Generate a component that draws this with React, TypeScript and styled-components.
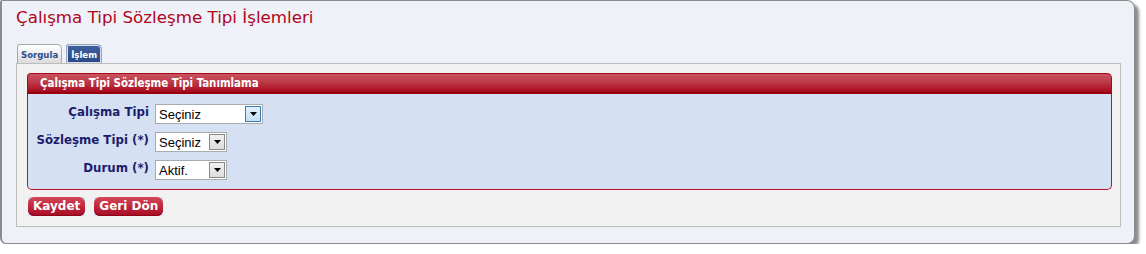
import React from "react";
import styled, { createGlobalStyle } from "styled-components";

const GlobalStyle = createGlobalStyle`
  html, body { margin: 0; padding: 0; background: #ffffff; }
  body { font-family: "DejaVu Sans", Verdana, sans-serif; }
`;

const Window = styled.div`
  box-sizing: border-box;
  width: 1135px;
  height: 244px;
  background: #eef2f8;
  border: 1px solid #8c8c8c;
  border-left: 2px solid #8c8c8c;
  border-radius: 2px 8px 8px 6px;
  box-shadow: 4px 4px 3px rgba(0, 0, 0, 0.45);
  display: flex;
  flex-direction: column;
  padding: 6px 0 0 14px;
`;

const Title = styled.h1`
  margin: 0;
  font-family: "DejaVu Sans", Verdana, sans-serif;
  font-weight: normal;
  font-size: 16.7px;
  line-height: 20px;
  color: #b0051a;
`;

const TabBar = styled.div`
  display: flex;
  gap: 4px;
  margin-top: 17px;
  padding-left: 1px;
  height: 19px;
`;

const Tab = styled.div<{ $active?: boolean }>`
  box-sizing: border-box;
  height: 19px;
  padding: 0 ${(p) => (p.$active ? 4 : 3)}px;
  display: flex;
  align-items: center;
  font-family: "DejaVu Sans Condensed", "DejaVu Sans", sans-serif;
  font-size: 9.5px;
  font-weight: bold;
  border: 1px solid ${(p) => (p.$active ? "#9aa6bc" : "#a8a8a8")};
  border-bottom: none;
  border-radius: 3px 5px 0 0;
  color: ${(p) => (p.$active ? "#ffffff" : "#2a4f8f")};
  background: ${(p) =>
    p.$active
      ? "linear-gradient(#3f5fa0, #2a4886)"
      : "linear-gradient(#ffffff, #dcdcdc)"};
  box-shadow: ${(p) => (p.$active ? "inset 0 0 0 1px #d8e0ee" : "none")};
`;

const Panel = styled.div`
  box-sizing: border-box;
  width: 1105px;
  height: 164px;
  background: #f2f2f2;
  border: 1px solid #bdbdbd;
  padding: 9px 8px 0 10px;
  display: flex;
  flex-direction: column;
  gap: 7px;
`;

const Fieldset = styled.div`
  box-sizing: border-box;
  width: 1085px;
  height: 117px;
  display: flex;
  flex-direction: column;
`;

const Legend = styled.div`
  box-sizing: border-box;
  height: 21px;
  border: 1px solid #a80a1c;
  border-bottom: 2px solid #98000f;
  border-radius: 4px 5px 0 0;
  background: linear-gradient(#c9535f 0%, #bd3a48 45%, #a8091c 100%);
  color: #ffffff;
  font-family: "DejaVu Sans Condensed", "DejaVu Sans", sans-serif;
  font-size: 11.4px;
  font-weight: bold;
  line-height: 18px;
  padding-left: 12px;
`;

const Body = styled.div`
  box-sizing: border-box;
  flex: 1;
  background: #d5e1f2;
  border: 1px solid #b3172a;
  border-top: none;
  border-radius: 0 0 5px 5px;
  padding: 10px 0 0 0;
  display: flex;
  flex-direction: column;
  gap: 8px;
`;

const Row = styled.div`
  display: flex;
  align-items: center;
  gap: 6px;
`;

const Label = styled.div`
  width: 121px;
  text-align: right;
  font-family: "DejaVu Sans", Verdana, sans-serif;
  font-size: 11.8px;
  font-weight: bold;
  color: #1c1c6c;
  margin-top: -5px;
  white-space: nowrap;
`;

const Select = styled.div<{ $width: number }>`
  box-sizing: border-box;
  width: ${(p) => p.$width}px;
  height: 20px;
  background: #ffffff;
  border: 1px solid #a5acb2;
  display: flex;
  align-items: center;
  justify-content: space-between;
  padding: 0 1px 0 3px;
  font-family: "Liberation Sans", Arial, sans-serif;
  font-size: 13px;
  color: #000000;
`;

const Arrow = styled.div<{ $focus?: boolean }>`
  box-sizing: border-box;
  width: 16px;
  height: 16px;
  display: flex;
  align-items: center;
  justify-content: center;
  border: 1px solid ${(p) => (p.$focus ? "#3d7bad" : "#8a8a8a")};
  background: ${(p) =>
    p.$focus ? "linear-gradient(#e4f1fb, #c3def5)" : "linear-gradient(#f0f0f0, #dcdcdc)"};
`;

const ArrowIcon = () => (
  <svg width="7" height="4" viewBox="0 0 7 4">
    <polygon points="0,0 7,0 3.5,4" fill="#000" />
  </svg>
);

const ButtonBar = styled.div`
  display: flex;
  gap: 9px;
  padding-left: 1px;
`;

const ButtonWrap = styled.div`
  background: #d8e4f4;
  display: flex;
`;

const Button = styled.button`
  height: 19px;
  padding: 0 5px;
  border: none;
  border-radius: 6px;
  background: linear-gradient(#d3485a 0%, #c32a3e 45%, #a50b22 100%);
  box-shadow: inset 0 -1px 0 #8d0018;
  color: #ffffff;
  font-family: "DejaVu Sans", Verdana, sans-serif;
  font-size: 12px;
  font-weight: bold;
  line-height: 19px;
  cursor: pointer;
`;

const fields = [
  { label: "Çalışma Tipi", value: "Seçiniz", width: 108, focus: true },
  { label: "Sözleşme Tipi (*)", value: "Seçiniz", width: 72 },
  { label: "Durum (*)", value: "Aktif.", width: 72 },
];

export default function App() {
  return (
    <>
      <GlobalStyle />
      <Window>
        <Title>Çalışma Tipi Sözleşme Tipi İşlemleri</Title>
        <TabBar>
          <Tab>Sorgula</Tab>
          <Tab $active>İşlem</Tab>
        </TabBar>
        <Panel>
          <Fieldset>
            <Legend>Çalışma Tipi Sözleşme Tipi Tanımlama</Legend>
            <Body>
              {fields.map((f) => (
                <Row key={f.label}>
                  <Label>{f.label}</Label>
                  <Select $width={f.width}>
                    <span>{f.value}</span>
                    <Arrow $focus={f.focus}>
                      <ArrowIcon />
                    </Arrow>
                  </Select>
                </Row>
              ))}
            </Body>
          </Fieldset>
          <ButtonBar>
            <ButtonWrap>
              <Button>Kaydet</Button>
            </ButtonWrap>
            <ButtonWrap>
              <Button>Geri Dön</Button>
            </ButtonWrap>
          </ButtonBar>
        </Panel>
      </Window>
    </>
  );
}
